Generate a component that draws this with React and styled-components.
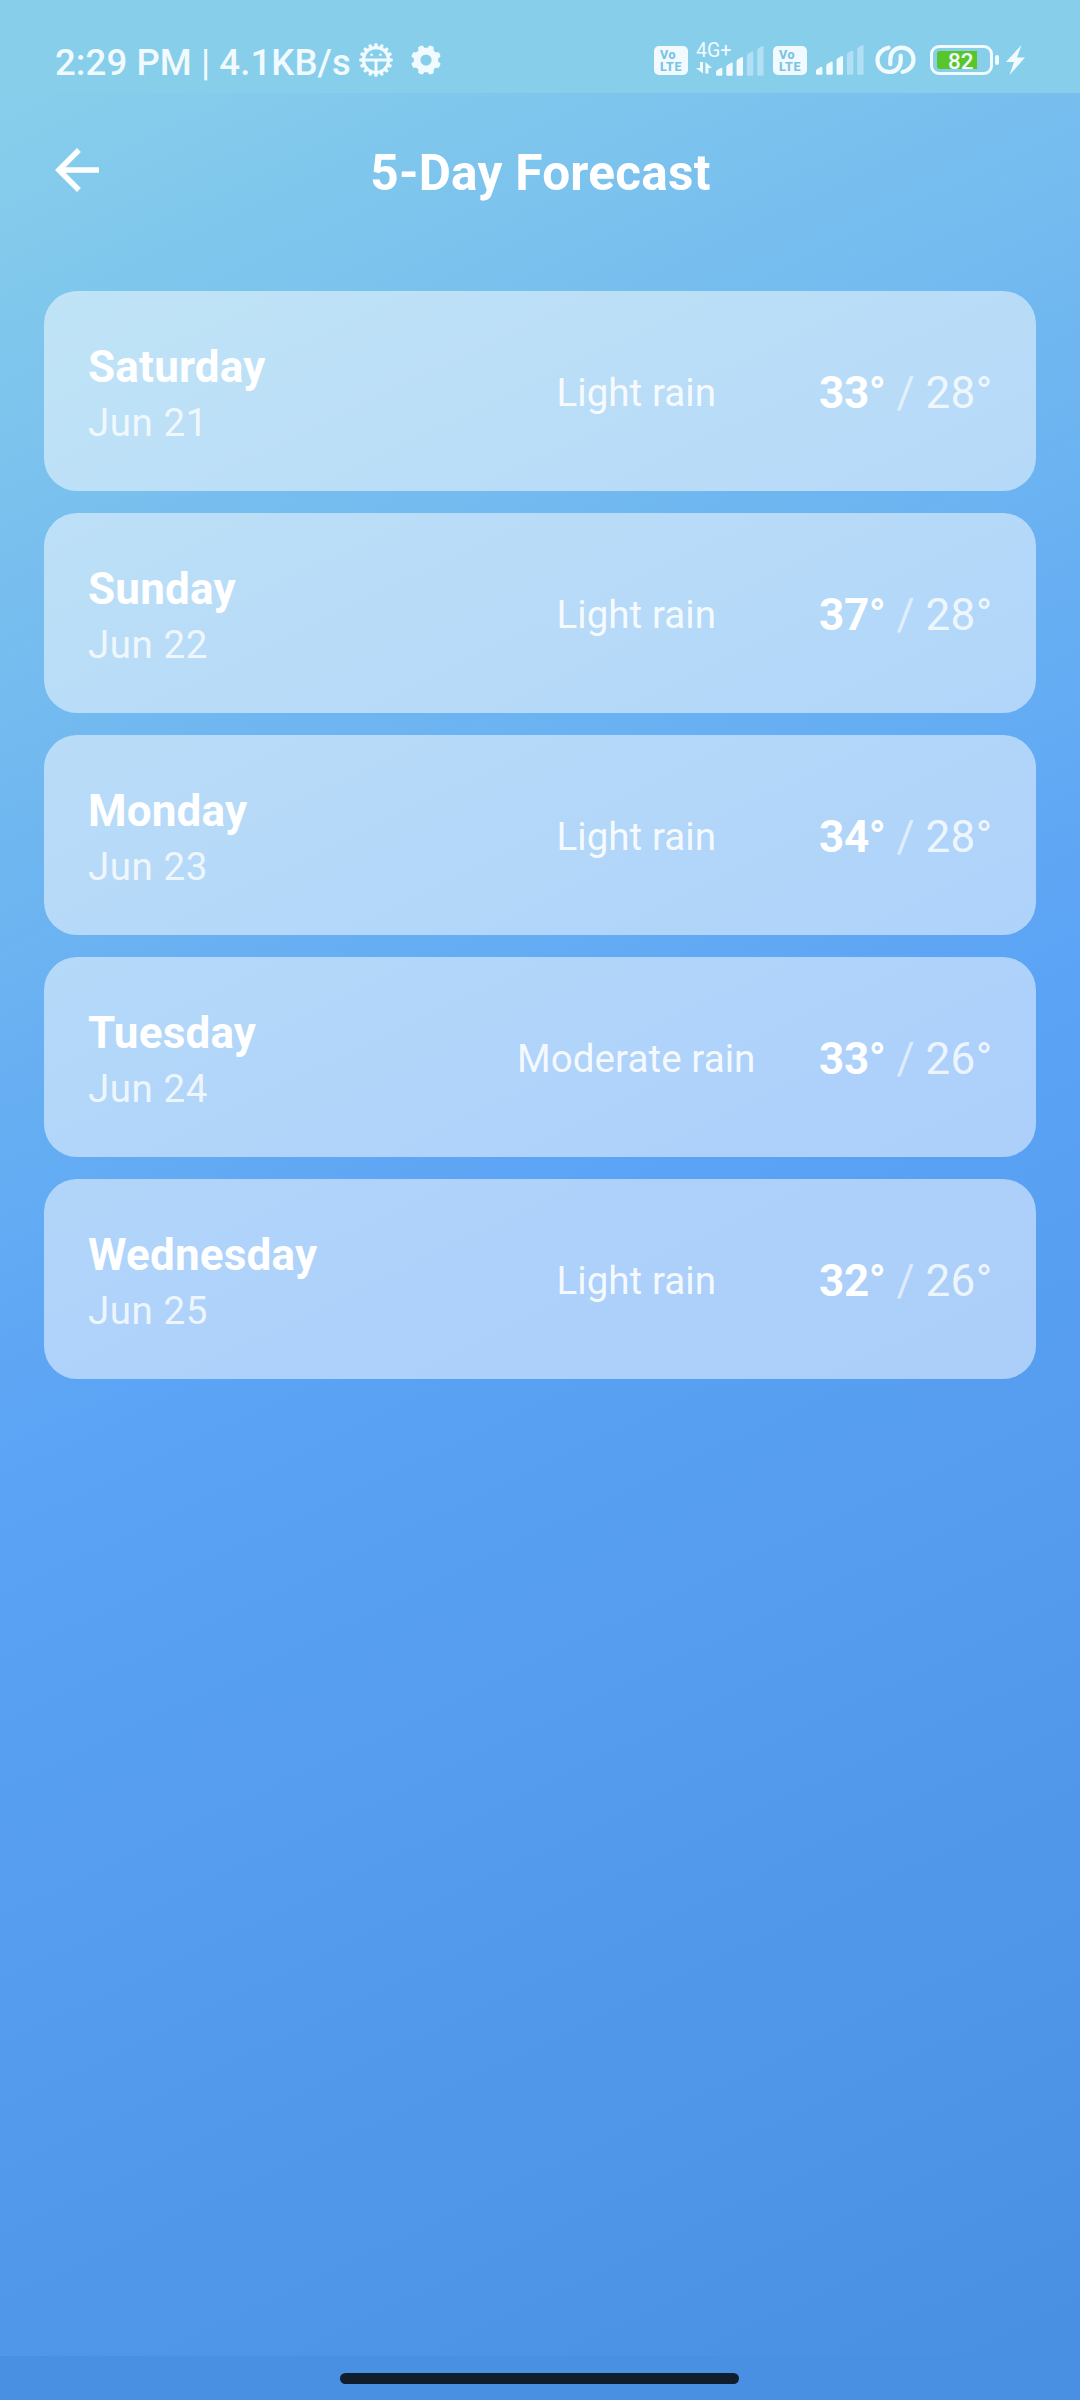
import React from 'react';
import styled, { createGlobalStyle } from 'styled-components';

const GlobalStyle = createGlobalStyle`
  *, *::before, *::after { box-sizing: border-box; }
  html, body { margin: 0; padding: 0; }
  body { font-family: Roboto, "Liberation Sans", sans-serif; }
  svg { display: block; flex: none; }
`;

const INK = '#f1faff';
const SKY = '#87ceeb';

const Screen = styled.div`
  width: 1080px;
  height: 2400px;
  display: flex;
  flex-direction: column;
  overflow: hidden;
  color: #fff;
`;

const StatusBar = styled.div`
  flex: none;
  height: 93px;
  padding: 27px 55px 0 55px;
  display: flex;
  justify-content: space-between;
  background: ${SKY};
  color: ${INK};
`;

const StatusGroup = styled.div`
  height: 66px;
  display: flex;
  align-items: center;
`;

const Clock = styled.span`
  width: 304px;
  padding-top: 6px;
  font-size: 36.5px;
  font-weight: 500;
  line-height: 60px;
  letter-spacing: 0.1px;
  white-space: nowrap;
`;

const Gap = styled.span`
  flex: none;
  width: ${(p) => p.$w}px;
`;

const VolteBadge = styled.div`
  width: 34px;
  height: 29px;
  border-radius: 5px;
  padding: 3px 0 0 6px;
  background: ${INK};
  color: #79c3e6;
  font-size: 12.5px;
  font-weight: 800;
  line-height: 12px;
  letter-spacing: 0.6px;
`;

const VolteLine = styled.div`
  height: 12px;
`;

const Network = styled.div`
  width: 68px;
  height: 36px;
  display: grid;
  grid-template-columns: 20px 48px;
  grid-template-rows: 20px 12px;
  align-content: start;
`;

const NetworkType = styled.span`
  font-size: 19.5px;
  line-height: 17px;
  white-space: nowrap;
`;

const BarsCell = styled.div`
  grid-column: 2;
  grid-row: 1 / 3;
  padding-top: 4px;
`;

const ArrowsCell = styled.div`
  grid-column: 1;
  grid-row: 2;
`;

const Battery = styled.div`
  width: 63px;
  height: 30px;
  padding: 3px 4px;
  border: 3px solid ${INK};
  border-radius: 9px;
`;

const BatteryLevel = styled.div`
  width: 40px;
  height: 18px;
  padding-left: 11px;
  border-radius: 3px 0 0 3px;
  background: #58c62a;
  font-size: 22.5px;
  font-weight: 500;
  line-height: 20px;
`;

const BatteryTip = styled.span`
  width: 4px;
  height: 10px;
  margin-left: 2px;
  border-radius: 2px;
  background: ${INK};
`;

const Page = styled.main`
  flex: 1;
  background: linear-gradient(154.49deg, #87ceeb 0%, #5ba3f5 50%, #4a90e2 100%);
`;

const Header = styled.header`
  height: 154px;
  padding: 0 44px;
  display: grid;
  grid-template-columns: 66px 1fr 66px;
  align-items: center;
`;

const BackButton = styled.button`
  width: 66px;
  height: 66px;
  padding: 0;
  border: 0;
  background: none;
  color: #fff;
`;

const Title = styled.h1`
  margin: 6px 0 0 1px;
  text-align: center;
  font-size: 49.5px;
  font-weight: 700;
  line-height: 58px;
  letter-spacing: 0.25px;
`;

const Forecast = styled.section`
  padding: 44px;
  display: flex;
  flex-direction: column;
  gap: 22px;
`;

const Card = styled.article`
  height: 200px;
  padding: 0 44px;
  display: grid;
  grid-template-columns: 1fr 1fr 173px;
  align-items: center;
  border-radius: 33px;
  background: rgba(255, 255, 255, 0.5);
`;

const Day = styled.div`
  padding-top: 6px;
`;

const Weekday = styled.div`
  font-size: 44px;
  font-weight: 700;
  line-height: 58px;
  letter-spacing: 0.2px;
`;

const DateText = styled.div`
  font-size: 38.5px;
  line-height: 54px;
  letter-spacing: 0.55px;
  color: rgba(255, 255, 255, 0.8);
`;

const Condition = styled.div`
  padding-top: 4px;
  text-align: center;
  font-size: 38.5px;
  line-height: 52px;
  letter-spacing: 0.08px;
  color: rgba(255, 255, 255, 0.9);
  white-space: nowrap;
`;

const Temps = styled.div`
  padding-top: 4px;
  text-align: right;
  font-size: 44px;
  line-height: 52px;
  white-space: nowrap;
`;

const High = styled.span`
  font-weight: 700;
  letter-spacing: -0.35px;
`;

const Slash = styled.span`
  color: rgba(255, 255, 255, 0.6);
`;

const Low = styled.span`
  letter-spacing: 0.3px;
  color: rgba(255, 255, 255, 0.8);
`;

const NavBar = styled.div`
  flex: none;
  height: 44px;
  padding-top: 17px;
  display: flex;
  justify-content: center;
  background: #4a90e2;
`;

const NavHandle = styled.div`
  width: 399px;
  height: 11px;
  margin-right: 1px;
  border-radius: 6px;
  background: #0f1d2d;
`;

function gearPath(c, outer, inner, teeth, tipShare, rootShare) {
  const points = [];
  const step = (Math.PI * 2) / teeth;
  for (let i = 0; i < teeth; i += 1) {
    const a = i * step - Math.PI / 2;
    [
      [inner, -rootShare],
      [outer, -tipShare],
      [outer, tipShare],
      [inner, rootShare],
    ].forEach(([r, s]) => {
      const t = a + s * step;
      points.push(`${(c + r * Math.cos(t)).toFixed(2)} ${(c + r * Math.sin(t)).toFixed(2)}`);
    });
  }
  return `M${points.join('L')}Z`;
}

const FaceGear = () => (
  <svg width="34" height="34" viewBox="0 0 34 34" fill={INK}>
    <path d={gearPath(17, 16.8, 14, 16, 0.2, 0.36)} />
    <circle cx="17" cy="17" r="10.8" fill={SKY} />
    <path d="M5 15.5h24v3H18.5v10h-3v-10H5z" />
    <circle cx="12.6" cy="11.8" r="1.4" />
    <circle cx="21.4" cy="11.8" r="1.4" />
  </svg>
);

const Gear = () => (
  <svg width="30" height="30" viewBox="0 0 30 30" fill={INK} stroke={INK} strokeLinejoin="round">
    <path d={gearPath(15, 14, 11.4, 8, 0.15, 0.27)} strokeWidth="2" transform="rotate(22.5 15 15)" />
    <circle cx="15" cy="15" r="5.6" fill={SKY} stroke="none" />
  </svg>
);

const SignalBars = () => (
  <svg width="48" height="30" viewBox="0 0 48 30" fill={INK}>
    {[21.7, 16.4, 11, 5.5, 0].map((top, i) => {
      const x = i * 10.3;
      return (
        <path
          key={top}
          opacity={i > 2 ? 0.4 : 1}
          d={`M${x} ${top + 4.4}q0-1.2 1-1.9l3.6-2.2q1.8-.8 1.8 1V28.4q0 1.3-1.3 1.3H${x + 1.3}q-1.3 0-1.3-1.3z`}
        />
      );
    })}
  </svg>
);

const DataArrows = () => (
  <svg width="17" height="12" viewBox="0 0 17 12" fill={INK}>
    <path d="M4 0h3v11.4L0 6h4zM9.4 0v11.4h3V6H16z" />
  </svg>
);

const LinkIcon = () => (
  <svg width="41" height="30" viewBox="0 0 41 30" fill="none" stroke={INK} strokeWidth="4.2" strokeLinecap="round">
    <path d="M13.5 2.7C7 3.8 2.5 9 2.5 15c0 7 5 12 11.8 12 7 0 11.4-5 11.4-11.5V10.5" />
    <path d="M27.5 27C34 25.9 38.500 20.700 38.500 14.700c0-7-5-12-11.800-12-7 0-11.400 5-11.400 11.500V19.200" />
  </svg>
);

const Bolt = () => (
  <svg width="19" height="30" viewBox="0 0 19 30" fill={INK}>
    <path d="M15.5 0 0 17h8L3.5 30 19 12.5h-8z" />
  </svg>
);

const BackArrow = () => (
  <svg width="66" height="66" viewBox="0 0 24 24" fill="currentColor">
    <path d="M20 11H7.83l5.59-5.59L12 4l-8 8 8 8 1.41-1.41L7.83 13H20v-2z" />
  </svg>
);

const Volte = () => (
  <VolteBadge>
    <VolteLine>Vo</VolteLine>
    <VolteLine>LTE</VolteLine>
  </VolteBadge>
);

const days = [
  { name: 'Saturday', date: 'Jun 21', condition: 'Light rain', high: 33, low: 28 },
  { name: 'Sunday', date: 'Jun 22', condition: 'Light rain', high: 37, low: 28 },
  { name: 'Monday', date: 'Jun 23', condition: 'Light rain', high: 34, low: 28 },
  { name: 'Tuesday', date: 'Jun 24', condition: 'Moderate rain', high: 33, low: 26 },
  { name: 'Wednesday', date: 'Jun 25', condition: 'Light rain', high: 32, low: 26 },
];

const DayCard = ({ day }) => (
  <Card>
    <Day>
      <Weekday>{day.name}</Weekday>
      <DateText>{day.date}</DateText>
    </Day>
    <Condition>{day.condition}</Condition>
    <Temps>
      <High>{day.high}°</High>
      <Slash> / </Slash>
      <Low>{day.low}°</Low>
    </Temps>
  </Card>
);

export default function App() {
  return (
    <>
      <GlobalStyle />
      <Screen>
        <StatusBar>
          <StatusGroup>
            <Clock>2:29 PM | 4.1KB/s</Clock>
            <FaceGear />
            <Gap $w={18} />
            <Gear />
          </StatusGroup>
          <StatusGroup>
            <Volte />
            <Gap $w={8} />
            <Network>
              <NetworkType>4G+</NetworkType>
              <ArrowsCell>
                <DataArrows />
              </ArrowsCell>
              <BarsCell>
                <SignalBars />
              </BarsCell>
            </Network>
            <Gap $w={9} />
            <Volte />
            <Gap $w={9} />
            <SignalBars />
            <Gap $w={11} />
            <LinkIcon />
            <Gap $w={14} />
            <Battery>
              <BatteryLevel>82</BatteryLevel>
            </Battery>
            <BatteryTip />
            <Gap $w={7} />
            <Bolt />
          </StatusGroup>
        </StatusBar>
        <Page>
          <Header>
            <BackButton aria-label="Back">
              <BackArrow />
            </BackButton>
            <Title>5-Day Forecast</Title>
          </Header>
          <Forecast>
            {days.map((day) => (
              <DayCard key={day.date} day={day} />
            ))}
          </Forecast>
        </Page>
        <NavBar>
          <NavHandle />
        </NavBar>
      </Screen>
    </>
  );
}
